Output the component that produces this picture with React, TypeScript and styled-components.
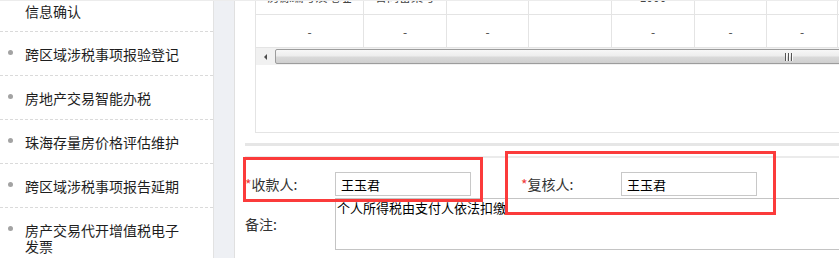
import React from "react";
import styled, { createGlobalStyle } from "styled-components";

const Global = createGlobalStyle`
  html, body { margin: 0; padding: 0; background: #fff; }
  body {
    font-family: "Noto Sans CJK SC", "Noto Sans", "Liberation Sans", sans-serif;
    overflow: hidden;
  }
  * { box-sizing: border-box; }
`;

const Page = styled.div`
  display: flex;
  width: 839px;
  height: 258px;
  overflow: hidden;
  border-top: 1px solid #ececec;
  background: #fff;
`;

const Sidebar = styled.nav`
  width: 214px;
  flex: none;
  border-right: 1px solid #e2e2e2;
  overflow: hidden;
`;

const NavList = styled.ul`
  list-style: none;
  margin: 0;
  padding: 0;
`;

const NavItem = styled.li<{ $cont?: boolean }>`
  display: flex;
  align-items: flex-start;
  gap: 12px;
  padding: ${(p) => (p.$cont ? "2px 10px 12px 8px" : "14px 10px 13px 8px")};
  border-bottom: 1px dashed #dadada;
  font-size: 14px;
  line-height: 16px;
  color: #1e1e1e;
`;

const Bullet = styled.span<{ $hidden?: boolean }>`
  flex: none;
  width: 5px;
  height: 5px;
  margin-top: 4px;
  border-radius: 50%;
  background: #a3a3a3;
  visibility: ${(p) => (p.$hidden ? "hidden" : "visible")};
`;

const NavText = styled.span`
  width: 156px;
`;

const Gutter = styled.div`
  width: 21px;
  flex: none;
  background: #eef0f4;
  border-right: 1px solid #e0e0e0;
`;

const Main = styled.main`
  flex: 1;
  min-width: 0;
  overflow: hidden;
`;

const TableBox = styled.section`
  margin-left: 20px;
  width: 1100px;
  height: 132px;
  border-left: 1px solid #e4e4e4;
  border-bottom: 1px solid #e4e4e4;
  overflow: hidden;
`;

const Grid = styled.div`
  margin-top: -19px;
  display: grid;
  grid-template-columns: 108px 83px 82px 83px 83px 72px 71px 120px;
`;

const Cell = styled.div<{ $lift?: boolean }>`
  height: 33px;
  padding-bottom: ${(p) => (p.$lift ? "4px" : "0")};
  border-right: 1px solid #e4e4e4;
  border-bottom: 1px solid #e4e4e4;
  display: flex;
  align-items: center;
  justify-content: center;
  font-size: 12px;
  color: #444;
  white-space: nowrap;
`;

const ScrollBar = styled.div`
  display: flex;
  height: 17px;
  background: #f1f1f1;
`;

const ScrollArrow = styled.div`
  flex: none;
  width: 19px;
  display: flex;
  align-items: center;
  justify-content: center;
`;

const Triangle = styled.span`
  width: 0;
  height: 0;
  border-top: 3px solid transparent;
  border-bottom: 3px solid transparent;
  border-right: 3px solid #4c4c4c;
`;

const Thumb = styled.div`
  flex: none;
  width: 1026px;
  height: 15px;
  margin-top: 1px;
  border: 1px solid #9c9c9c;
  border-radius: 2px;
  background: linear-gradient(#f7f7f7 0%, #ededed 45%, #d9d9d9 55%, #cfcfcf 100%);
  display: flex;
  align-items: center;
  justify-content: center;
`;

const Grip = styled.div`
  display: flex;
  gap: 2px;
`;

const GripLine = styled.span`
  width: 1px;
  height: 8px;
  background: #555;
  box-shadow: 1px 0 0 #fafafa;
`;

const FormArea = styled.section`
  position: relative;
  margin: 10px 0 0 10px;
  width: 1000px;
  border-top: 3px solid #e6e6e6;
`;

const Divider = styled.div`
  margin-top: 10px;
  height: 2px;
  background: #ebebeb;
`;

const FormRow = styled.div<{ $pad?: string }>`
  display: flex;
  align-items: center;
  padding: ${(p) => p.$pad ?? "0"};
`;

const Label = styled.label<{ $w: number; $ml?: number }>`
  flex: none;
  width: ${(p) => p.$w}px;
  margin-left: ${(p) => p.$ml ?? 0}px;
  font-size: 14px;
  color: #333;
  white-space: nowrap;
`;

const Star = styled.span`
  color: #f03a3a;
`;

const TextInput = styled.input`
  flex: none;
  width: 136px;
  height: 24px;
  border: 1px solid #c8c8c8;
  padding: 0 5px;
  font-family: "Noto Sans CJK SC", "Noto Sans", sans-serif;
  font-size: 13px;
  color: #000;
  background: #fff;
  outline: none;
`;

const Memo = styled.textarea`
  flex: none;
  width: 640px;
  height: 52px;
  border: 1px solid #c4c4c4;
  padding: 1px 1px;
  font-family: "Noto Sans CJK SC", "Noto Sans", sans-serif;
  font-size: 13px;
  line-height: 16px;
  color: #000;
  resize: none;
  outline: none;
  overflow: hidden;
`;

const Highlight = styled.div<{ $l: number; $t: number; $w: number; $h: number }>`
  position: absolute;
  left: ${(p) => p.$l}px;
  top: ${(p) => p.$t}px;
  width: ${(p) => p.$w}px;
  height: ${(p) => p.$h}px;
  border: 3px solid #fb3b3b;
  pointer-events: none;
`;

const navItems = [
  { text: "信息确认", cont: true },
  { text: "跨区域涉税事项报验登记" },
  { text: "房地产交易智能办税" },
  { text: "珠海存量房价格评估维护" },
  { text: "跨区域涉税事项报告延期" },
  { text: "房产交易代开增值税电子发票" },
];

const row1 = ["房源编号及地址", "合同备案号", "", "", "1000", "", "", ""];
const row2 = ["-", "-", "-", "", "-", "-", "-", ""];

export default function App() {
  return (
    <>
      <Global />
      <Page>
        <Sidebar>
          <NavList>
            {navItems.map((it) => (
              <NavItem key={it.text} $cont={it.cont}>
                <Bullet $hidden={it.cont} />
                <NavText>{it.text}</NavText>
              </NavItem>
            ))}
          </NavList>
        </Sidebar>
        <Gutter />
        <Main>
          <TableBox>
            <Grid>
              {row1.map((c, i) => (
                <Cell key={"a" + i} $lift>
                  {c}
                </Cell>
              ))}
              {row2.map((c, i) => (
                <Cell key={"b" + i}>{c}</Cell>
              ))}
            </Grid>
            <ScrollBar>
              <ScrollArrow>
                <Triangle />
              </ScrollArrow>
              <Thumb>
                <Grip>
                  <GripLine />
                  <GripLine />
                  <GripLine />
                </Grip>
              </Thumb>
            </ScrollBar>
          </TableBox>
          <FormArea>
            <Divider />
            <FormRow $pad="14px 0 2px">
              <Label $w={90}>
                <Star>*</Star>收款人:
              </Label>
              <TextInput defaultValue="王玉君" readOnly />
              <Label $w={100} $ml={50}>
                <Star>*</Star>复核人:
              </Label>
              <TextInput defaultValue="王玉君" readOnly />
            </FormRow>
            <FormRow>
              <Label $w={90}>备注:</Label>
              <Memo defaultValue="个人所得税由支付人依法扣缴" readOnly />
            </FormRow>
            <Highlight $l={-2} $t={11} $w={240} $h={45} />
            <Highlight $l={260} $t={5} $w={271} $h={64} />
          </FormArea>
        </Main>
      </Page>
    </>
  );
}
